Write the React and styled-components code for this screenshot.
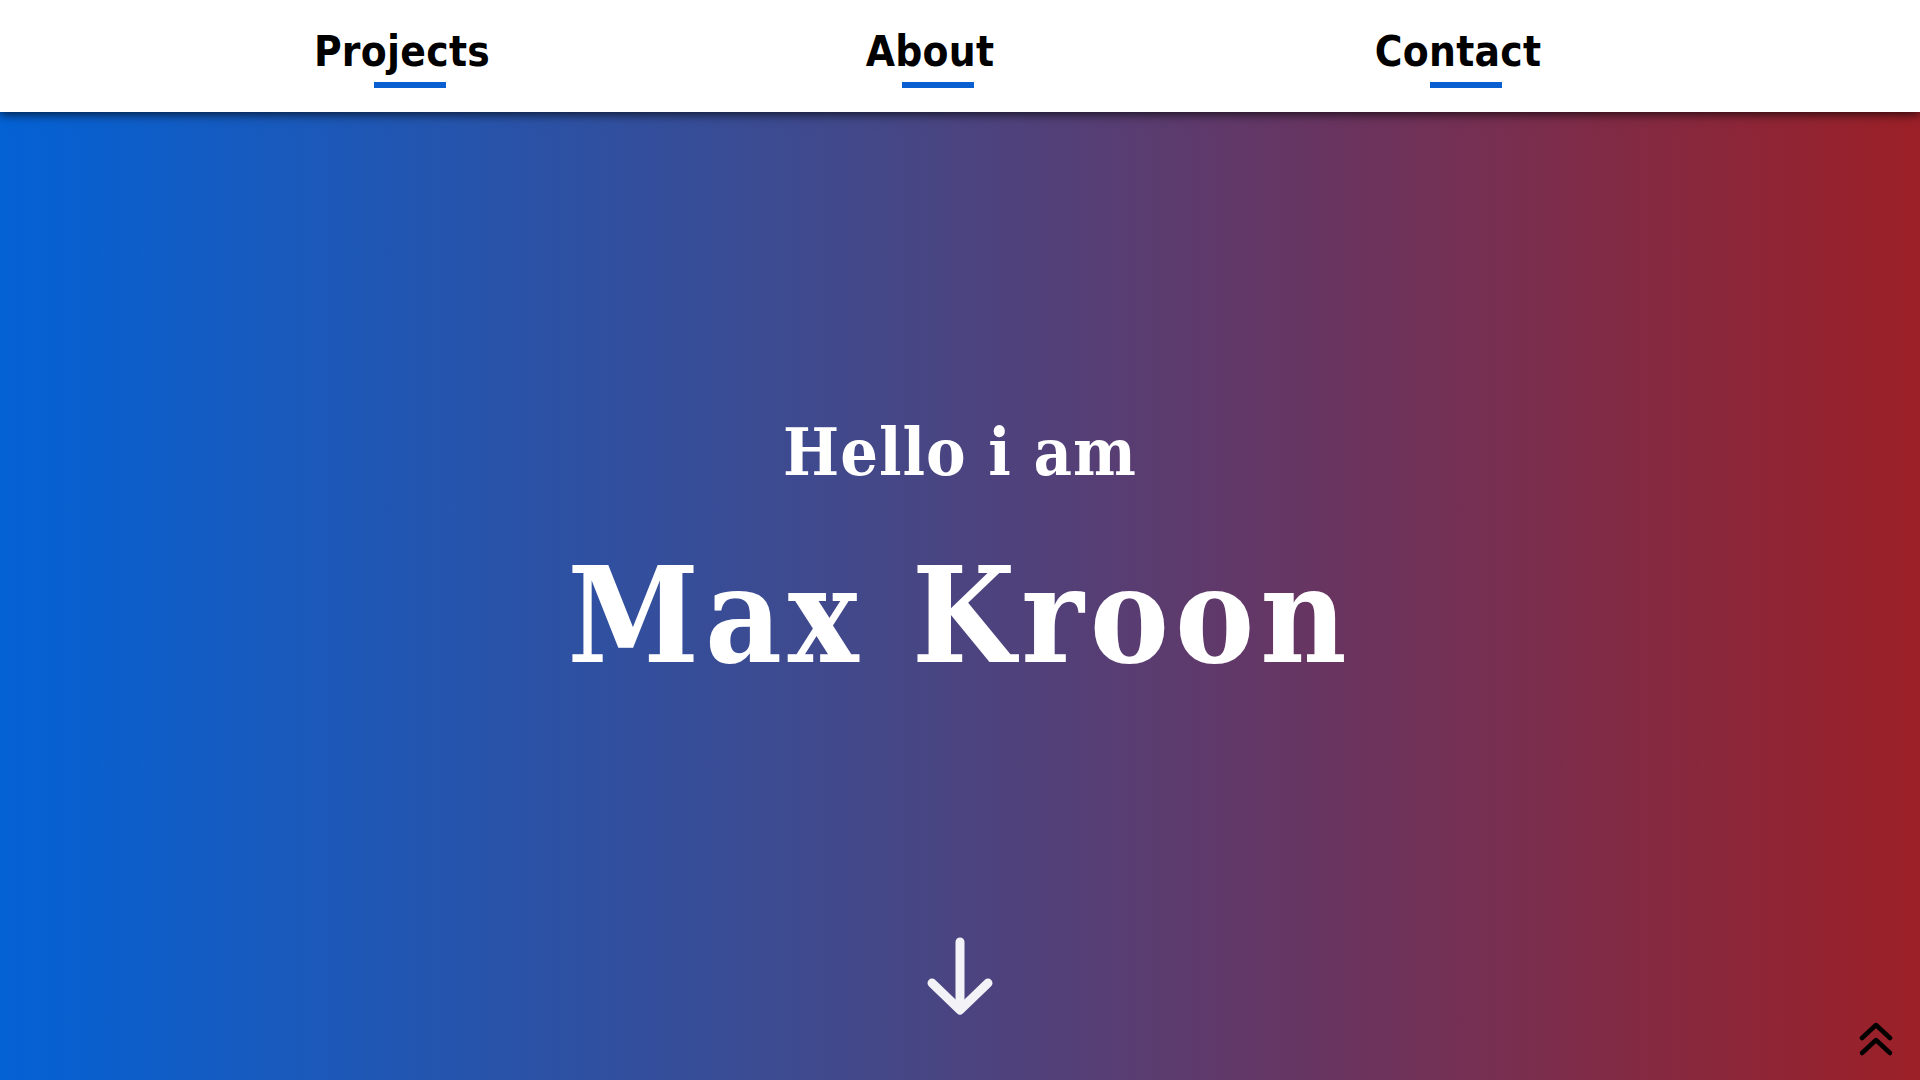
import { createGlobalStyle, styled } from 'styled-components';

const GlobalStyle = createGlobalStyle`
  html, body {
    margin: 0;
    padding: 0;
    height: 100%;
    overflow: hidden;
  }
`;

const Page = styled.div`
  width: 1920px;
  height: 1080px;
  display: flex;
  flex-direction: column;
  position: relative;
`;

const Nav = styled.nav`
  height: 112px;
  background: #fff;
  display: grid;
  grid-template-columns: repeat(3, 528px);
  padding-left: 138px;
  position: relative;
  z-index: 2;
  box-shadow: 0 2px 10px rgba(0, 0, 0, 0.75);
`;

const NavItem = styled.a`
  justify-self: center;
  position: relative;
  padding-top: 27px;
  font-family: 'DejaVu Sans Condensed', 'DejaVu Sans', sans-serif;
  font-weight: bold;
  font-size: 42px;
  letter-spacing: 0.3px;
  color: #000;
  text-decoration: none;
  &::after {
    content: '';
    position: absolute;
    left: 50%;
    top: 82px;
    width: 72px;
    height: 6px;
    background: #0a5fd1;
    transform: translateX(calc(-50% + ${({ $shift }) => $shift}px));
  }
`;

const Hero = styled.main`
  flex: 1;
  background: linear-gradient(90deg, #0462d5 0%, #434889 45%, #6a345f 70%, #9c2027 100%);
  display: flex;
  flex-direction: column;
  align-items: center;
  color: #fff;
  font-family: 'DejaVu Serif Condensed', 'DejaVu Serif', serif;
  font-weight: bold;
  position: relative;
`;

const Greeting = styled.h2`
  margin: 307px 0 0;
  font-size: 66px;
  line-height: 1;
  letter-spacing: 1px;
`;

const Name = styled.h1`
  margin: 65px 0 0;
  font-size: 132px;
  line-height: 1;
  letter-spacing: 6px;
`;

const DownArrow = styled.svg`
  margin-top: auto;
  margin-bottom: 64px;
`;

const TopButton = styled.svg`
  position: absolute;
  right: 26px;
  bottom: 22px;
`;

export default function App() {
  return (
    <Page>
      <GlobalStyle />
      <Nav>
        <NavItem href="#projects" $shift={8}>Projects</NavItem>
        <NavItem href="#about" $shift={8}>About</NavItem>
        <NavItem href="#contact" $shift={8}>Contact</NavItem>
      </Nav>
      <Hero>
        <Greeting>Hello i am</Greeting>
        <Name>Max Kroon</Name>
        <DownArrow width="70" height="82" viewBox="0 0 70 82">
          <g fill="none" stroke="#f2f2f7" strokeWidth="9" strokeLinecap="round" strokeLinejoin="round">
            <path d="M35 8 V73" />
            <path d="M7 49 L35 76 L63 49" />
          </g>
        </DownArrow>
        <TopButton width="36" height="36" viewBox="0 0 36 36">
          <g fill="none" stroke="#000" strokeWidth="4.5" strokeLinecap="round" strokeLinejoin="round">
            <path d="M4 16 L18 3 L32 16" />
            <path d="M4 31 L18 18 L32 31" />
          </g>
        </TopButton>
      </Hero>
    </Page>
  );
}
